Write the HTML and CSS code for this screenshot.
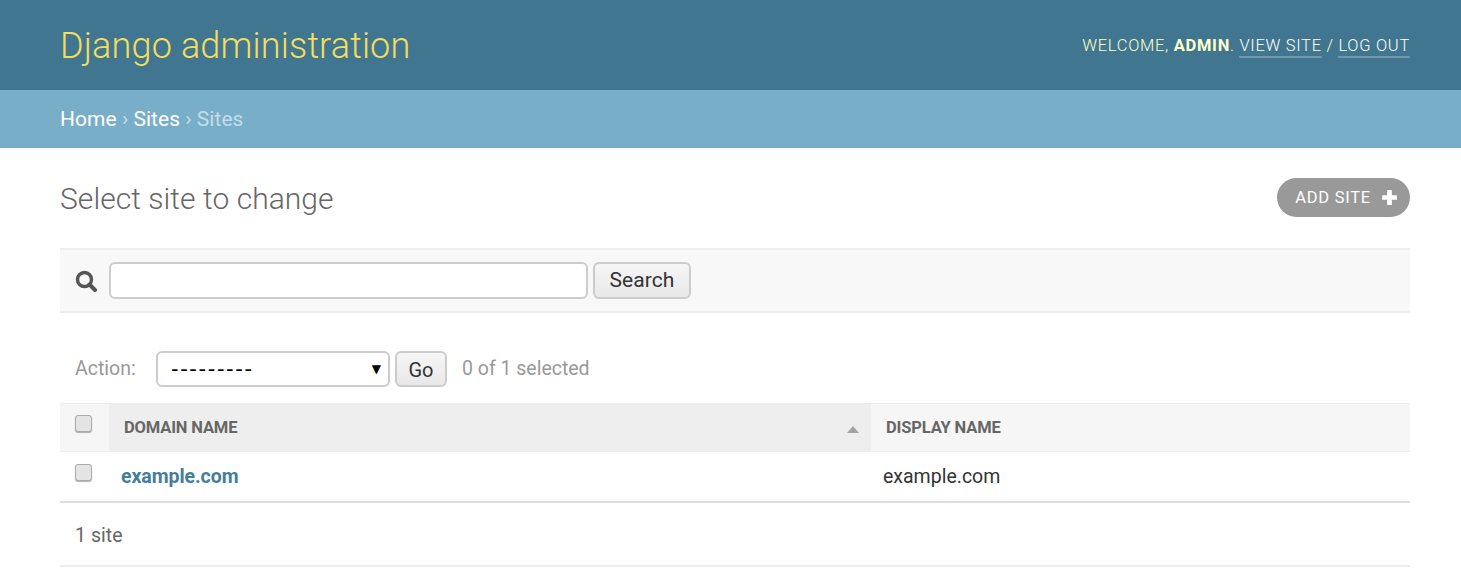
FILE: index.html
```html
<!DOCTYPE html>
<html lang="en">
<head>
<meta charset="utf-8">
<title>Select site to change | Django site admin</title>
<link rel="stylesheet" href="styles.css">
</head>
<body>
<header class="site-header">
  <div class="branding">Django administration</div>
  <div class="user-tools">Welcome, <strong>admin</strong>. <a href="#">View site</a> / <a href="#">Log out</a></div>
</header>
<nav class="breadcrumbs"><a href="#">Home</a> › <a href="#">Sites</a> › Sites</nav>
<main class="content">
  <div class="title-row">
    <h1>Select site to change</h1>
    <a class="add-link" href="#">Add site
      <svg class="plus" viewBox="0 0 16 16" aria-hidden="true"><path d="M5.800 1.500a.5.5 0 0 1 .5-.5h3.400a.5.5 0 0 1 .5.5v4.300h4.300a.5.5 0 0 1 .5.5v3.400a.5.5 0 0 1-.5.5h-4.300v4.300a.5.5 0 0 1-.5.5H6.300a.5.5 0 0 1-.5-.5v-4.300H1.500a.5.5 0 0 1-.5-.5V6.300a.5.5 0 0 1 .5-.5h4.300z"/></svg>
    </a>
  </div>
  <form class="toolbar">
    <svg class="search-icon" viewBox="0 0 22 22" aria-hidden="true"><circle cx="9.500" cy="9.500" r="7" fill="none" stroke="#555" stroke-width="3.400"/><path d="M14.500 14.500l5.500 5.500" stroke="#555" stroke-width="4" stroke-linecap="round"/></svg>
    <input class="search-input" type="text" aria-label="Search">
    <button class="btn search-btn" type="button">Search</button>
  </form>
  <div class="actions">
    <label class="action-label">Action:</label>
    <span class="select-box"><span class="select-value">---------</span><span class="select-arrow">▼</span></span>
    <button class="btn go-btn" type="button">Go</button>
    <span class="action-counter">0 of 1 selected</span>
  </div>
  <table class="results">
    <thead>
      <tr>
        <th class="col-check"><input class="check" type="checkbox" aria-label="Select all"></th>
        <th class="col-domain sorted"><span>Domain name</span><i class="sort-arrow"></i></th>
        <th class="col-display">Display name</th>
      </tr>
    </thead>
    <tbody>
      <tr>
        <td class="col-check"><input class="check check-row" type="checkbox" aria-label="Select"></td>
        <td class="cell-domain"><a href="#">example.com</a></td>
        <td class="cell-display">example.com</td>
      </tr>
    </tbody>
  </table>
  <p class="paginator">1 site</p>
</main>
</body>
</html>
```
FILE: styles.css
```css
* { box-sizing: border-box; }
html, body { margin: 0; padding: 0; }
body {
  font-family: Roboto, "Liberation Sans", sans-serif;
  font-size: 21px;
  color: #333;
  background: #fff;
  overflow: hidden;
}
a { text-decoration: none; }

.site-header {
  height: 90px;
  padding: 0 51px 0 60px;
  background: #417690;
  display: flex;
  justify-content: space-between;
  align-items: flex-start;
}
.branding {
  margin-top: 24px;
  font-size: 36px;
  line-height: 44px;
  font-weight: 300;
  letter-spacing: 0.15px;
  color: #f5dd5d;
}
.user-tools {
  margin-top: 34px;
  font-size: 16.500px;
  line-height: 24px;
  font-weight: 300;
  letter-spacing: 0.71px;
  text-transform: uppercase;
  color: #ffc;
}
.user-tools strong { font-weight: 700; }
.user-tools a {
  color: #fff;
  padding-bottom: 1px;
  border-bottom: 2px solid rgba(255, 255, 255, 0.25);
}

.breadcrumbs {
  height: 58px;
  padding: 0 60px;
  background: #79aec8;
  color: #c4dce8;
  font-size: 21px;
  font-weight: 400;
  letter-spacing: 0.03px;
  line-height: 58px;
}
.breadcrumbs a { color: #fff; }

.content { padding: 30px 51px 0 60px; }

.title-row {
  height: 70px;
  display: flex;
  justify-content: space-between;
  align-items: flex-start;
}
h1 {
  margin: 0;
  font-size: 30px;
  line-height: 42px;
  font-weight: 300;
  letter-spacing: 0.05px;
  color: #666;
}
.add-link {
  height: 39px;
  padding: 0 12px 0 18px;
  border-radius: 20px;
  background: #999;
  color: #fff;
  font-size: 16.500px;
  letter-spacing: 0.75px;
  text-transform: uppercase;
  display: flex;
  align-items: center;
  gap: 10px;
}
.plus { width: 17px; height: 17px; fill: #fff; }

.toolbar {
  height: 65px;
  padding: 0 15px;
  background: #f8f8f8;
  border-top: 2px solid #eee;
  border-bottom: 2px solid #eee;
  display: flex;
  align-items: center;
}
.search-icon { width: 22px; height: 22px; margin-right: 12px; }
.search-input {
  width: 479px;
  height: 37px;
  border: 2px solid #ccc;
  border-radius: 6px;
  background: #fff;
  padding: 0;
  margin-right: 5px;
}
.btn {
  font-family: Roboto, "Liberation Sans", sans-serif;
  font-size: 21px;
  color: #333;
  border: 2px solid #ccc;
  border-radius: 6px;
  background: linear-gradient(#f6f6f6, #e8e8e8);
  padding: 0;
}
.search-btn { width: 98px; height: 37px; padding-bottom: 2px; letter-spacing: 0.05px; }

.actions {
  height: 36px;
  margin-top: 38px;
  padding-left: 15px;
  display: flex;
  align-items: center;
  color: #999;
}
.action-label { width: 81px; font-size: 19.500px; font-weight: 400; color: #999; padding-bottom: 1px; }
.select-box {
  width: 234px;
  height: 36px;
  border: 2px solid #ccc;
  border-radius: 6px;
  background: #fff;
  color: #000;
  padding: 0 7px 0 13px;
  margin-right: 5px;
  display: flex;
  align-items: center;
  justify-content: space-between;
}
.select-value { font-family: "DejaVu Sans", sans-serif; font-size: 21px; letter-spacing: 1.600px; }
.select-arrow { font-family: "DejaVu Sans", sans-serif; font-size: 12px; }
.go-btn { width: 52px; height: 36px; margin-right: 15px; font-size: 20px; padding-top: 2px; }
.action-counter { font-size: 19.500px; color: #999; padding-bottom: 2px; letter-spacing: -0.01px; }

.results {
  width: 100%;
  margin-top: 16px;
  border-collapse: collapse;
  table-layout: fixed;
}
.results th {
  height: 48px;
  padding: 0 15px;
  background: #f6f6f6;
  border-top: 1.500px solid #eee;
  border-bottom: 1.500px solid #eee;
  text-align: left;
  font-size: 16.500px;
  font-weight: 700;
  letter-spacing: -0.15px;
  color: #666;
  text-transform: uppercase;
}
.results th.sorted { background: #eee; position: relative; }
.col-check { width: 49px; vertical-align: top; }
.col-domain { width: 762px; }
.sort-arrow {
  position: absolute;
  right: 12px;
  top: 22px;
  border-left: 6.500px solid transparent;
  border-right: 6.500px solid transparent;
  border-bottom: 7px solid #a3a3a3;
}
.results td {
  height: 50px;
  padding: 0 12px;
  border-bottom: 2px solid #ddd;
  font-size: 19.500px;
}
.results td.col-check { padding: 0 15px; }
.cell-domain a { color: #447e9b; font-weight: 700; letter-spacing: -0.06px; }
.check {
  appearance: none;
  display: block;
  width: 17px;
  height: 17px;
  margin: 11px 0 0 0;
  border: 1.500px solid #aaa;
  border-radius: 3px;
  background: #e4e4e4;
  box-shadow: 0 1px 1px rgba(0, 0, 0, 0.3);
}
.check-row { margin-top: 12px; }
.paginator {
  height: 64px;
  margin: 0;
  padding: 1px 15px 0;
  border-bottom: 2px solid #eee;
  font-size: 19.500px;
  line-height: 64px;
  letter-spacing: 0.05px;
  color: #666;
}
```
